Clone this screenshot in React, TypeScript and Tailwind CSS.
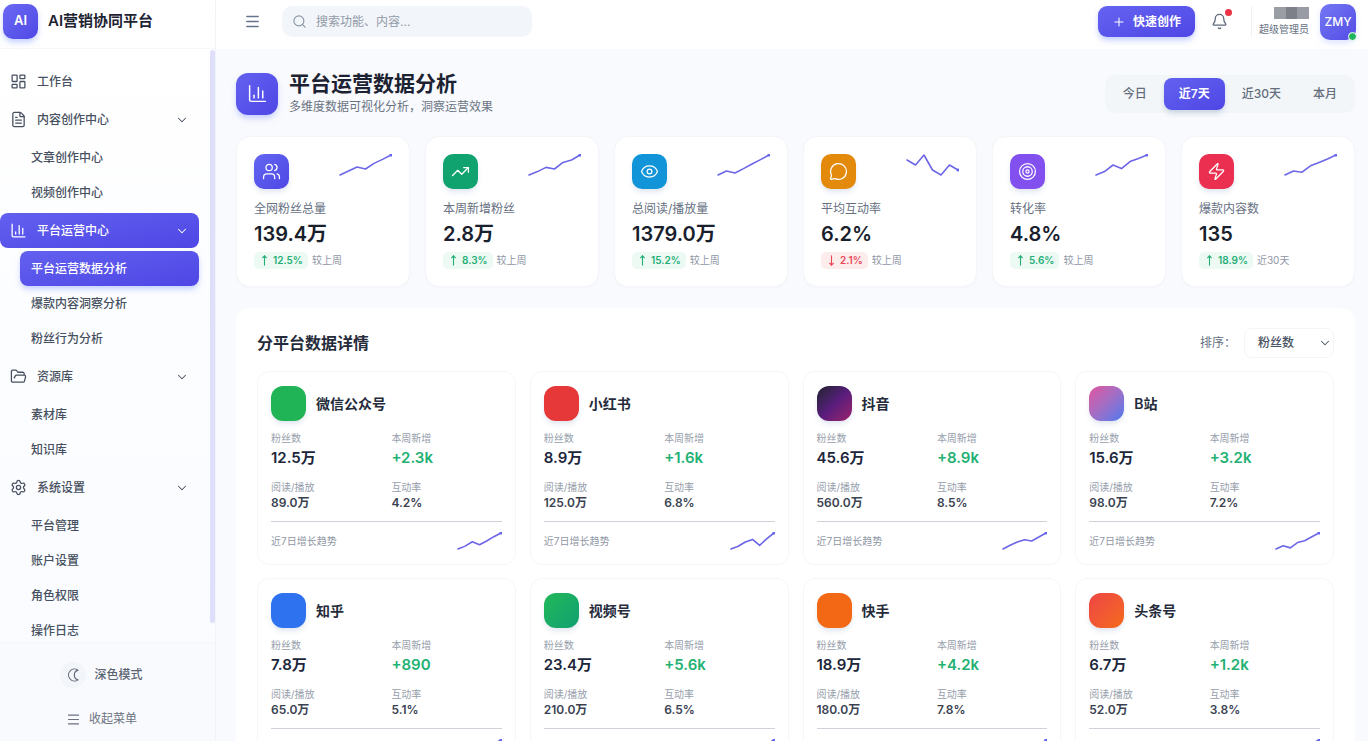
import React from "react";
import {
  Bell,
  ChartColumn,
  ChevronDown,
  Eye,
  FileText,
  FolderOpen,
  LayoutDashboard,
  LucideIcon,
  Menu,
  MessageCircle,
  MoveDown,
  MoveUp,
  Plus,
  Search,
  Settings,
  Target,
  TrendingUp,
  Users,
  Zap,
} from "lucide-react";

interface NavGroup {
  label: string;
  icon: LucideIcon;
  active?: boolean;
  children?: string[];
}

interface Kpi {
  label: string;
  value: string;
  change: string;
  down?: boolean;
  period: string;
  icon: LucideIcon;
  color: string;
  trend: number[];
}

interface Platform {
  name: string;
  color: string;
  fans: string;
  added: string;
  reads: string;
  rate: string;
  trend: number[];
}

const ACTIVE_PAGE = "平台运营数据分析";

const navGroups: NavGroup[] = [
  { label: "工作台", icon: LayoutDashboard },
  {
    label: "内容创作中心",
    icon: FileText,
    children: ["文章创作中心", "视频创作中心"],
  },
  {
    label: "平台运营中心",
    icon: ChartColumn,
    active: true,
    children: ["平台运营数据分析", "爆款内容洞察分析", "粉丝行为分析"],
  },
  { label: "资源库", icon: FolderOpen, children: ["素材库", "知识库"] },
  {
    label: "系统设置",
    icon: Settings,
    children: ["平台管理", "账户设置", "角色权限", "操作日志"],
  },
];

const kpis: Kpi[] = [
  {
    label: "全网粉丝总量",
    value: "139.4万",
    change: "12.5%",
    period: "较上周",
    icon: Users,
    color: "bg-linear-to-br from-[#6366f1] to-[#4f46e5]",
    trend: [0, 20, 40, 30, 58, 78, 100],
  },
  {
    label: "本周新增粉丝",
    value: "2.8万",
    change: "8.3%",
    period: "较上周",
    icon: TrendingUp,
    color: "bg-[#10a36f]",
    trend: [0, 17, 38, 30, 63, 75, 100],
  },
  {
    label: "总阅读/播放量",
    value: "1379.0万",
    change: "15.2%",
    period: "较上周",
    icon: Eye,
    color: "bg-[#1295d8]",
    trend: [0, 20, 10, 32, 55, 77, 100],
  },
  {
    label: "平均互动率",
    value: "6.2%",
    change: "2.1%",
    down: true,
    period: "较上周",
    icon: MessageCircle,
    color: "bg-[#e38a0c]",
    trend: [75, 50, 100, 25, 0, 50, 25],
  },
  {
    label: "转化率",
    value: "4.8%",
    change: "5.6%",
    period: "较上周",
    icon: Target,
    color: "bg-[#8250ee]",
    trend: [0, 17, 50, 32, 67, 83, 100],
  },
  {
    label: "爆款内容数",
    value: "135",
    change: "18.9%",
    period: "近30天",
    icon: Zap,
    color: "bg-[#ea2f50]",
    trend: [0, 20, 14, 46, 62, 80, 100],
  },
];

const platforms: Platform[] = [
  {
    name: "微信公众号",
    color: "bg-[#21b457]",
    fans: "12.5万",
    added: "+2.3k",
    reads: "89.0万",
    rate: "4.2%",
    trend: [0, 18, 45, 27, 50, 77, 100],
  },
  {
    name: "小红书",
    color: "bg-[#e63838]",
    fans: "8.9万",
    added: "+1.6k",
    reads: "125.0万",
    rate: "6.8%",
    trend: [0, 17, 44, 60, 23, 65, 100],
  },
  {
    name: "抖音",
    color: "bg-linear-to-br from-[#1f2030] via-[#581c7c] to-[#9d1a6a]",
    fans: "45.6万",
    added: "+8.9k",
    reads: "560.0万",
    rate: "8.5%",
    trend: [0, 23, 44, 58, 50, 75, 100],
  },
  {
    name: "B站",
    color: "bg-linear-to-br from-[#e24f9c] to-[#4378ee]",
    fans: "15.6万",
    added: "+3.2k",
    reads: "98.0万",
    rate: "7.2%",
    trend: [0, 20, 7, 40, 52, 77, 100],
  },
  {
    name: "知乎",
    color: "bg-[#2f72ef]",
    fans: "7.8万",
    added: "+890",
    reads: "65.0万",
    rate: "5.1%",
    trend: [0, 18, 45, 27, 50, 77, 100],
  },
  {
    name: "视频号",
    color: "bg-linear-to-br from-[#22b858] to-[#10a070]",
    fans: "23.4万",
    added: "+5.6k",
    reads: "210.0万",
    rate: "6.5%",
    trend: [0, 23, 44, 58, 50, 75, 100],
  },
  {
    name: "快手",
    color: "bg-[#f26814]",
    fans: "18.9万",
    added: "+4.2k",
    reads: "180.0万",
    rate: "7.8%",
    trend: [0, 17, 44, 60, 23, 65, 100],
  },
  {
    name: "头条号",
    color: "bg-linear-to-br from-[#ee4444] to-[#f46a14]",
    fans: "6.7万",
    added: "+1.2k",
    reads: "52.0万",
    rate: "3.8%",
    trend: [0, 20, 7, 40, 52, 77, 100],
  },
];

const ranges = ["今日", "近7天", "近30天", "本月"];

const Sparkline: React.FC<{ data: number[]; width: number; height: number }> = ({
  data,
  width,
  height,
}) => {
  const points = data.map((v, i) => [
    1 + (i * (width - 2)) / (data.length - 1),
    height - 1 - (v / 100) * (height - 2),
  ]);
  const [endX, endY] = points[points.length - 1];
  return (
    <svg width={width} height={height} aria-hidden="true">
      <polyline
        points={points.map((p) => p.join(",")).join(" ")}
        fill="none"
        stroke="#6d66e6"
        strokeWidth="1.6"
        strokeLinecap="round"
        strokeLinejoin="round"
      />
      <circle cx={endX} cy={endY} r="1.5" fill="#6366f1" />
    </svg>
  );
};

// crescent with both horns pointing right
const CrescentIcon: React.FC = () => (
  <svg
    width="14"
    height="14"
    viewBox="0 0 14 14"
    fill="none"
    stroke="currentColor"
    strokeWidth="1.1"
    strokeLinejoin="round"
    aria-hidden="true"
  >
    <path d="M12 2.1A6 6 0 1 0 12 11.9A5.1 5.1 0 0 1 12 2.1Z" />
  </svg>
);

const Sidebar: React.FC = () => (
  <aside className="flex w-[216px] shrink-0 flex-col border-r border-[#f0f3f8] bg-linear-to-b from-white to-[#f9fbff]">
    <div className="flex h-[49px] shrink-0 items-center gap-[10px] border-b border-[#f5f7fa] pb-[6px] pl-[3px]">
      <div className="flex size-[35px] items-center justify-center rounded-[10px] bg-linear-to-br from-[#6b68f3] to-[#5048e5] text-[13px] font-semibold text-white shadow-md shadow-indigo-200">
        AI
      </div>
      <span className="text-[15px] font-semibold text-[#1e2433]">AI营销协同平台</span>
    </div>

    <div className="relative min-h-0 flex-1 overflow-hidden">
      <nav className="flex flex-col gap-[3px] pt-[15px] pr-[16px]">
        {navGroups.map((group) => (
          <div key={group.label} className="flex flex-col gap-[3px]">
            <button
              className={`flex h-[35px] items-center rounded-[8px] pr-[10px] pl-[10px] text-xs font-medium ${
                group.active
                  ? "bg-linear-to-br from-[#6260ef] to-[#4f46e5] text-white"
                  : "text-[#475060]"
              }`}
            >
              <group.icon size={17} strokeWidth={1.8} className="mr-[10px]" />
              {group.label}
              {group.children && (
                <ChevronDown size={14} strokeWidth={1.8} className="ml-auto" />
              )}
            </button>
            {group.children && (
              <div className="flex flex-col pl-5">
                {group.children.map((child) => (
                  <a
                    key={child}
                    href="#"
                    className={`flex h-[35px] items-center rounded-[8px] pl-[11px] text-xs font-medium ${
                      child === ACTIVE_PAGE
                        ? "bg-linear-to-br from-[#6260ef] to-[#4f46e5] text-white shadow-md shadow-indigo-200"
                        : "text-[#475060]"
                    }`}
                  >
                    {child}
                  </a>
                ))}
              </div>
            )}
          </div>
        ))}
      </nav>
      <div className="absolute top-px right-0 h-[573px] w-[5px] rounded-full bg-[#dfdffb]" />
    </div>

    <div className="flex h-[99px] shrink-0 flex-col items-center gap-4 border-t border-[#f4f6f9] bg-[#f9fafd] pt-[19px] pr-3">
      <button className="flex items-center gap-[8px] text-xs font-medium text-[#5b6473]">
        <span className="flex size-[26px] items-center justify-center rounded-full bg-[#f2f5fa]">
          <CrescentIcon />
        </span>
        深色模式
      </button>
      <button className="flex h-[30px] items-center gap-[8px] text-xs text-[#6b7280]">
        <Menu size={15} strokeWidth={1.8} />
        收起菜单
      </button>
    </div>
  </aside>
);

const Header: React.FC = () => (
  <header className="flex h-[49px] shrink-0 items-center bg-white pr-3 pb-[6px] pl-7">
    <button aria-label="菜单" className="text-[#64748b]">
      <Menu size={17} strokeWidth={2} />
    </button>
    <label className="ml-[21px] flex h-[31px] w-[250px] items-center gap-[9px] rounded-[10px] bg-[#f2f5f9] pl-[10px] text-[#8b95a5]">
      <Search size={15} strokeWidth={1.8} />
      <input
        type="text"
        aria-label="搜索"
        placeholder="搜索功能、内容..."
        className="min-w-0 flex-1 bg-transparent text-xs outline-none placeholder:text-[#9199a8]"
      />
    </label>
    <button className="ml-auto flex h-[31px] items-center gap-[7px] rounded-[9px] bg-linear-to-br from-[#6563f1] to-[#4f46e5] px-[14px] text-xs font-semibold text-white shadow-md shadow-indigo-200">
      <Plus size={14} strokeWidth={1.8} />
      快速创作
    </button>
    <button aria-label="通知" className="relative ml-4 text-[#5d6878]">
      <Bell size={17} strokeWidth={1.8} />
      <span className="absolute -top-1 -right-1 size-[7px] rounded-full bg-[#ec3345]" />
    </button>
    <div className="ml-[23px] flex h-[31px] items-center border-l border-[#eef1f6] pl-[7px]">
      <div className="flex flex-col items-end">
        <div className="grid h-3 w-[35px] grid-cols-3">
          <span className="bg-[#9b9da4]" />
          <span className="bg-[#7d7f89]" />
          <span className="bg-[#989ba3]" />
        </div>
        <span className="mt-[2px] text-[10px] leading-4 text-[#667082]">超级管理员</span>
      </div>
      <div className="relative ml-[11px] flex size-[36px] items-center justify-center rounded-[10px] bg-linear-to-br from-[#7577f3] to-[#544be5] text-xs font-medium text-white shadow-md shadow-indigo-100">
        ZMY
        <span className="absolute -right-px -bottom-px size-[9px] rounded-full border border-white bg-[#20b45c]" />
      </div>
    </div>
  </header>
);

const KpiCard: React.FC<{ kpi: Kpi }> = ({ kpi }) => (
  <div className="rounded-[14px] border border-[#f5f6fa] bg-white p-[17px] shadow-xs shadow-slate-100">
    <div className="flex items-start justify-between">
      <div
        className={`flex size-[35px] items-center justify-center rounded-[10px] text-white shadow-md shadow-slate-200 ${kpi.color}`}
      >
        <kpi.icon size={19} strokeWidth={1.6} />
      </div>
      <Sparkline data={kpi.trend} width={53} height={22} />
    </div>
    <p className="mt-3 text-xs leading-4 text-[#667082]">{kpi.label}</p>
    <p className="text-xl leading-[35px] font-semibold text-[#1a1f2e]">{kpi.value}</p>
    <div className="flex items-center gap-1 text-[10px]">
      <span
        className={`flex h-[17px] items-center gap-[3px] rounded-[5px] px-[5px] font-semibold ${
          kpi.down ? "bg-[#fdecec] text-[#ea4658]" : "bg-[#ecfaf3] text-[#23ae76]"
        }`}
      >
        {kpi.down ? (
          <MoveDown size={11} strokeWidth={2.4} />
        ) : (
          <MoveUp size={11} strokeWidth={2.4} />
        )}
        {kpi.change}
      </span>
      <span className="text-[#8f97a5]">{kpi.period}</span>
    </div>
  </div>
);

const PlatformCard: React.FC<{ platform: Platform }> = ({ platform }) => (
  <div className="rounded-[12px] border border-[#f5f6fa] bg-white px-[13px] pt-[14px] pb-[13px]">
    <div className="flex items-center gap-[10px]">
      <span
        className={`size-[35px] rounded-[12px] shadow-md shadow-slate-200 ${platform.color}`}
      />
      <h3 className="text-sm font-semibold text-[#252b3a]">{platform.name}</h3>
    </div>
    <dl className="mt-[9px] grid grid-cols-2 gap-x-[10px] gap-y-[9px]">
      <div>
        <dt className="text-[10px] leading-4 text-[#969eab]">粉丝数</dt>
        <dd className="text-[15px] leading-6 font-semibold text-[#20263a]">
          {platform.fans}
        </dd>
      </div>
      <div>
        <dt className="text-[10px] leading-4 text-[#969eab]">本周新增</dt>
        <dd className="text-[15px] leading-6 font-semibold text-[#22b172]">
          {platform.added}
        </dd>
      </div>
      <div>
        <dt className="text-[10px] leading-4 text-[#969eab]">阅读/播放</dt>
        <dd className="text-xs leading-4 font-semibold text-[#3a4252]">{platform.reads}</dd>
      </div>
      <div>
        <dt className="text-[10px] leading-4 text-[#969eab]">互动率</dt>
        <dd className="text-xs leading-4 font-semibold text-[#3a4252]">{platform.rate}</dd>
      </div>
    </dl>
    <div className="mt-[10px] flex h-[30px] items-center justify-between border-t border-[#cfd2d8] pt-[9px]">
      <span className="text-[10px] text-[#8f97a5]">近7日增长趋势</span>
      <Sparkline data={platform.trend} width={45} height={18} />
    </div>
  </div>
);

export default function App() {
  return (
    <div className="h-screen overflow-hidden bg-white pb-2 font-[Inter,'Noto_Sans_CJK_SC',sans-serif]">
      <div className="flex h-full overflow-hidden">
        <Sidebar />
        <div className="flex min-w-0 flex-1 flex-col">
          <Header />
          <main className="min-h-0 flex-1 overflow-hidden bg-[#f9fafd] pt-[23px] pr-[13px] pl-5">
            <div className="flex items-center">
              <div className="flex size-[42px] items-center justify-center rounded-[12px] bg-linear-to-br from-[#6361f0] to-[#4f46e5] text-white shadow-md shadow-indigo-200">
                <ChartColumn size={21} strokeWidth={1.7} />
              </div>
              <div className="ml-[11px]">
                <h1 className="text-[21px] leading-6 font-semibold text-[#1c2231]">
                  平台运营数据分析
                </h1>
                <p className="mt-[3px] text-xs leading-4 text-[#6b7483]">
                  多维度数据可视化分析，洞察运营效果
                </p>
              </div>
              <div className="ml-auto flex gap-[2px] rounded-[10px] bg-[#f3f6f9] p-[3px]">
                {ranges.map((range) => (
                  <button
                    key={range}
                    className={`h-8 rounded-[8px] px-[15px] text-xs ${
                      range === "近7天"
                        ? "bg-linear-to-br from-[#6361f0] to-[#4f46e5] font-semibold text-white shadow-md shadow-slate-300"
                        : "font-medium text-[#646d7b]"
                    }`}
                  >
                    {range}
                  </button>
                ))}
              </div>
            </div>

            <div className="mt-[21px] grid grid-cols-6 gap-[15px]">
              {kpis.map((kpi) => (
                <KpiCard key={kpi.label} kpi={kpi} />
              ))}
            </div>

            <section className="mt-[21px] rounded-[14px] bg-white px-[21px] pt-5 pb-[21px]">
              <div className="mb-[13px] flex items-center">
                <h2 className="text-base leading-6 font-semibold text-[#252b3a]">
                  分平台数据详情
                </h2>
                <label htmlFor="sort" className="ml-auto text-xs text-[#667082]">
                  排序：
                </label>
                <div className="relative ml-2">
                  <select
                    id="sort"
                    className="h-[30px] w-[90px] appearance-none rounded-[8px] border border-[#f4f5f9] bg-white pl-[13px] text-xs font-medium text-[#4b5464]"
                  >
                    <option>粉丝数</option>
                    <option>互动率</option>
                  </select>
                  <ChevronDown
                    size={14}
                    strokeWidth={1.8}
                    className="pointer-events-none absolute top-2 right-[2px] text-[#4b5464]"
                  />
                </div>
              </div>
              <div className="grid grid-cols-4 gap-x-[14px] gap-y-[13px]">
                {platforms.map((platform) => (
                  <PlatformCard key={platform.name} platform={platform} />
                ))}
              </div>
            </section>
          </main>
        </div>
      </div>
    </div>
  );
}
